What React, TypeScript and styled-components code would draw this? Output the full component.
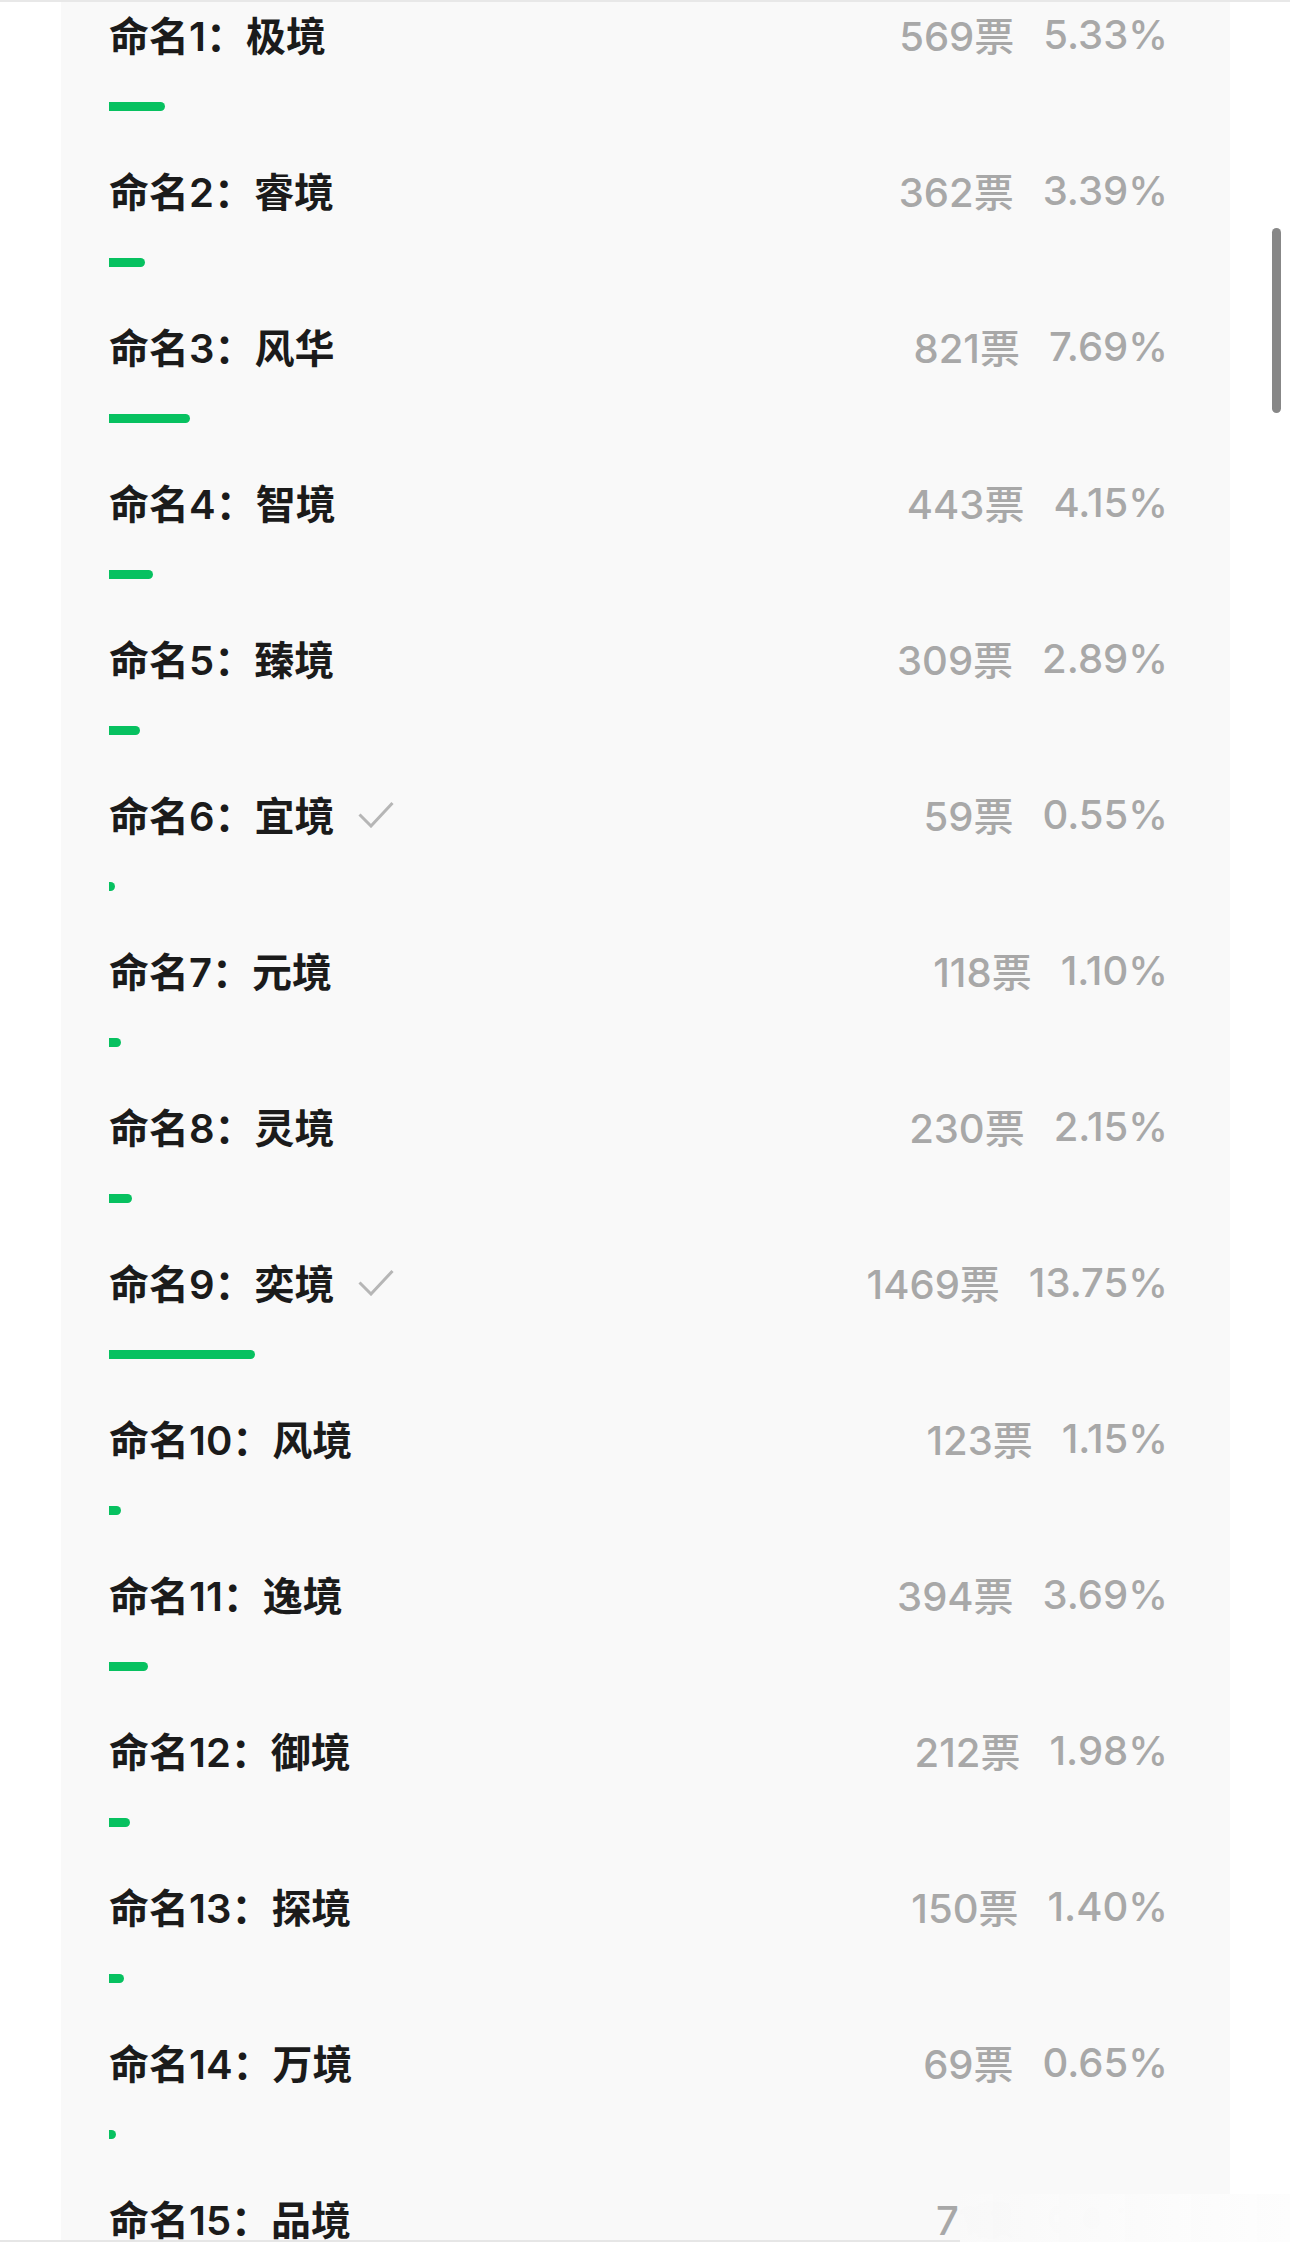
import styled, { createGlobalStyle } from "styled-components";

type Option = { name: string; votes: string; percent: number; picked?: boolean };

const options: Option[] = [
  { name: "极境", votes: "569", percent: 5.33 },
  { name: "睿境", votes: "362", percent: 3.39 },
  { name: "风华", votes: "821", percent: 7.69 },
  { name: "智境", votes: "443", percent: 4.15 },
  { name: "臻境", votes: "309", percent: 2.89 },
  { name: "宜境", votes: "59", percent: 0.55, picked: true },
  { name: "元境", votes: "118", percent: 1.1 },
  { name: "灵境", votes: "230", percent: 2.15 },
  { name: "奕境", votes: "1469", percent: 13.75, picked: true },
  { name: "风境", votes: "123", percent: 1.15 },
  { name: "逸境", votes: "394", percent: 3.69 },
  { name: "御境", votes: "212", percent: 1.98 },
  { name: "探境", votes: "150", percent: 1.4 },
  { name: "万境", votes: "69", percent: 0.65 },
  { name: "品境", votes: "71", percent: 0.67 },
];

const GlobalStyle = createGlobalStyle`
  html, body {
    margin: 0;
    padding: 0;
    background: #ffffff;
  }
  body {
    font-family: Inter, "Noto Sans CJK SC", sans-serif;
  }
`;

const Screen = styled.div`
  position: relative;
  width: 1290px;
  height: 2254px;
  overflow: hidden;
  background: #ffffff;
`;

const Viewport = styled.div`
  height: 2238px;
  border-top: 2px solid #e8e8e8;
  border-bottom: 2px solid #e6e6e6;
  overflow: hidden;
`;

const Card = styled.div`
  margin: 0 60px 0 61px;
  min-height: 100%;
  padding: 4px 62px 0 48px;
  background: #f9f9f9;
`;

const Row = styled.div`
  height: 156px;
  display: flex;
  flex-direction: column;
`;

const Head = styled.div`
  height: 56px;
  display: flex;
  align-items: center;
  justify-content: space-between;
`;

const Name = styled.div`
  display: flex;
  align-items: center;
  font-size: 40px;
  font-weight: 600;
  color: #1b1b1b;
  white-space: nowrap;
`;

const Check = styled.svg`
  margin-left: 23px;
  width: 36px;
  height: 27px;
`;

const Stats = styled.div`
  display: flex;
  align-items: center;
  gap: 29px;
  font-size: 40px;
  font-weight: 500;
  color: #a8a8a8;
  white-space: nowrap;
`;

const Track = styled.div`
  margin-top: 40px;
  height: 9px;
  width: 100%;
`;

const Fill = styled.div`
  height: 100%;
  background: #07c160;
  border-radius: 0 5px 5px 0;
`;

const ScrollThumb = styled.div`
  position: absolute;
  left: 1272px;
  top: 228px;
  width: 9px;
  height: 185px;
  border-radius: 5px;
  background: #878787;
`;

const Watermark = styled.div`
  position: absolute;
  left: 960px;
  top: 2194px;
  width: 330px;
  height: 48px;
  background: linear-gradient(90deg, rgba(249, 249, 249, 0.97), rgba(253, 253, 253, 0.99));
  backdrop-filter: blur(6px);
`;

const App = () => (
  <Screen>
    <GlobalStyle />
    <Viewport>
      <Card>
        {options.map((o, i) => (
          <Row key={i}>
            <Head>
              <Name>
                命名{i + 1}：{o.name}
                {o.picked && (
                  <Check viewBox="0 0 36 27">
                    <polyline points="1.5,13.5 13,25 34.5,2" fill="none" stroke="#b6b6b6" strokeWidth="3" />
                  </Check>
                )}
              </Name>
              <Stats>
                <span>{o.votes}票</span>
                <span>{o.percent.toFixed(2)}%</span>
              </Stats>
            </Head>
            <Track>
              <Fill style={{ width: `${o.percent}%` }} />
            </Track>
          </Row>
        ))}
      </Card>
    </Viewport>
    <ScrollThumb />
    <Watermark />
  </Screen>
);

export default App;
